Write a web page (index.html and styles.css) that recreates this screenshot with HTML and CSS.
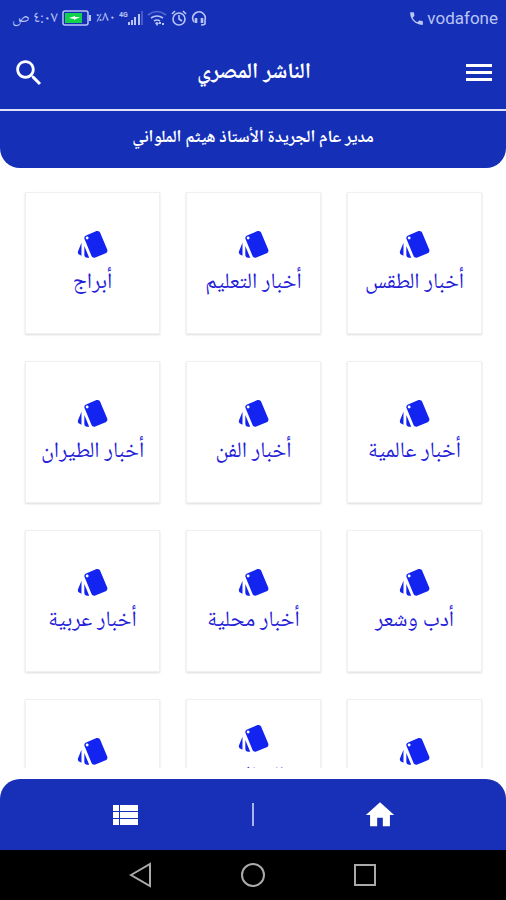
FILE: index.html
```
<!DOCTYPE html>
<html lang="ar" dir="rtl">
<head>
<meta charset="utf-8">
<meta name="viewport" content="width=device-width, initial-scale=1">
<title>الناشر المصري</title>
<link rel="stylesheet" href="styles.css">
</head>
<body>
<svg class="defs" aria-hidden="true">
  <symbol id="cards" viewBox="0 0 24 24"><path d="M2.53 19.65l1.34.56v-9.03l-2.43 5.86c-.41 1.02.08 2.19 1.09 2.61zm19.5-3.7L17.07 3.98c-.31-.75-1.04-1.21-1.81-1.23-.26 0-.53.04-.79.15L7.1 5.95c-.75.31-1.21 1.03-1.23 1.8-.01.27.04.54.15.8l4.96 11.97c.31.76 1.05 1.22 1.83 1.23.26 0 .52-.05.77-.15l7.36-3.05c1.02-.42 1.51-1.59 1.09-2.6zM7.88 8.75c-.55 0-1-.45-1-1s.45-1 1-1 1 .45 1 1-.45 1-1 1zm-2 11c0 1.1.9 2 2 2h1.45l-3.45-8.34v6.34z"/></symbol>
</svg>
<div class="status" dir="ltr">
  <div class="status-group">
    <span class="clock" dir="rtl">٤:٠٧ ص</span>
    <svg class="battery" viewBox="0 0 30 16" aria-hidden="true"><rect x="1" y="1" width="25" height="14" rx="2" fill="none" stroke="currentColor" stroke-width="1.5"/><rect x="3" y="3" width="17" height="10" fill="#12d24b"/><path d="M27 5h2v6h-2z" fill="currentColor"/><path d="M7 8l6-2v1h5l-6 3V9z" fill="#fff"/></svg>
    <span class="percent">٪٨٠</span>
    <svg class="signal" viewBox="0 0 24 16" aria-hidden="true"><path d="M9 12h2v3H9zM12 10h2v5h-2zM15 7h2v8h-2zM19 4h2v11h-2z" fill="currentColor"/><path d="M22 1h2v14h-2z" fill="currentColor" opacity=".3"/><text x="0" y="7" class="network">4G</text></svg>
    <svg class="wifi" viewBox="0 0 20 16" aria-hidden="true"><g fill="none" stroke="currentColor" stroke-width="1.6"><path d="M1 5q9-7 18 0" opacity=".4"/><path d="M4 8q6-4 12 0M7 11q3-2 6 0"/></g><path d="M8 13l2-1 2 1-2 3zM12 12h2v2h-2zM15 13h2v2h-2z" fill="currentColor"/></svg>
    <svg class="small-icon" viewBox="0 0 16 16" fill="none" stroke="currentColor" stroke-width="1.6" aria-hidden="true"><circle cx="8" cy="9" r="6"/><path d="M8 5v4l3 2M1 4l3-3M12 1l3 3"/></svg>
    <svg class="small-icon" viewBox="0 0 16 16" fill="none" stroke="currentColor" stroke-width="1.6" aria-hidden="true"><path d="M3 12a6.300 6.300 0 1 1 11-2v4q-1 1-4 1"/><path d="M5 8v5M11 8v5" stroke-width="2.600"/></svg>
  </div>
  <div class="status-group carrier">
    <svg class="phone" viewBox="0 0 24 24" fill="currentColor" aria-hidden="true"><path d="M20 15.500c-1.250 0-2.450-.2-3.570-.57-.35-.11-.74-.03-1.020.24l-2.200 2.200c-2.830-1.440-5.150-3.750-6.590-6.580l2.200-2.210c.28-.27.36-.66.25-1.010C8.700 6.450 8.500 5.250 8.500 4c0-.55-.45-1-1-1H4c-.55 0-1 .45-1 1 0 9.390 7.610 17 17 17 .55 0 1-.45 1-1v-3.500c0-.55-.45-1-1-1z"/></svg>
    <span>vodafone</span>
  </div>
</div>
<header class="header">
  <button class="icon-button" aria-label="القائمة"><svg class="icon-large" viewBox="0 0 34 34" fill="currentColor"><path d="M4 8h26v3H4zM4 15h26v3H4zM4 22h26v3H4z"/></svg></button>
  <h1>الناشر المصري</h1>
  <button class="icon-button" aria-label="بحث"><svg class="icon-large" viewBox="0 0 24 24" fill="currentColor"><path d="M15.500 14h-.79l-.28-.27C15.410 12.590 16 11.110 16 9.500 16 5.910 13.090 3 9.500 3S3 5.910 3 9.500 5.910 16 9.500 16c1.610 0 3.090-.59 4.230-1.570l.27.28v.79l5 4.990L20.490 19l-4.990-5zm-6 0C7.010 14 5 11.990 5 9.500S7.010 5 9.500 5 14 7.010 14 9.500 11.990 14 9.500 14z"/></svg></button>
</header>
<p class="banner">مدير عام الجريدة الأستاذ هيثم الملواني</p>
<main class="sections">
  <a class="card" href="#"><svg class="card-icon"><use href="#cards"/></svg><span>أخبار الطقس</span></a>
  <a class="card" href="#"><svg class="card-icon"><use href="#cards"/></svg><span>أخبار التعليم</span></a>
  <a class="card" href="#"><svg class="card-icon"><use href="#cards"/></svg><span>أبراج</span></a>
  <a class="card" href="#"><svg class="card-icon"><use href="#cards"/></svg><span>أخبار عالمية</span></a>
  <a class="card" href="#"><svg class="card-icon"><use href="#cards"/></svg><span>أخبار الفن</span></a>
  <a class="card" href="#"><svg class="card-icon"><use href="#cards"/></svg><span>أخبار الطيران</span></a>
  <a class="card" href="#"><svg class="card-icon"><use href="#cards"/></svg><span>أدب وشعر</span></a>
  <a class="card" href="#"><svg class="card-icon"><use href="#cards"/></svg><span>أخبار محلية</span></a>
  <a class="card" href="#"><svg class="card-icon"><use href="#cards"/></svg><span>أخبار عربية</span></a>
  <a class="card" href="#"><svg class="card-icon"><use href="#cards"/></svg></a>
  <a class="card card-tall" href="#"><svg class="card-icon"><use href="#cards"/></svg><span>المقالات</span></a>
  <a class="card" href="#"><svg class="card-icon"><use href="#cards"/></svg></a>
</main>
<nav class="tabs">
  <a href="#" aria-label="الرئيسية"><svg class="icon-large" viewBox="0 0 24 24" fill="currentColor"><path d="M10 20v-6h4v6h5v-8h3L12 3 2 12h3v8z"/></svg></a>
  <span class="divider"></span>
  <a href="#" aria-label="الأقسام"><svg class="icon-large" viewBox="0 0 34 34" fill="currentColor"><path d="M4 7h6v6H4zM11 7h18v6H11zM4 14h6v6H4zM11 14h18v6H11zM4 21h6v6H4zM11 21h18v6H11z"/></svg></a>
</nav>
<div class="system" dir="ltr">
  <button aria-label="رجوع"><svg viewBox="0 0 26 26"><path d="M3 13L22 2v22z"/></svg></button>
  <button aria-label="الشاشة الرئيسية"><svg viewBox="0 0 26 26"><circle cx="13" cy="13" r="11"/></svg></button>
  <button aria-label="التطبيقات الأخيرة"><svg viewBox="0 0 26 26"><path d="M3 3h20v20H3z"/></svg></button>
</div>
</body>
</html>
```
FILE: styles.css
```
* { box-sizing: border-box; }

body {
  margin: 0;
  height: 100vh;
  display: flex;
  flex-direction: column;
  background: #fff;
  font-family: "Noto Naskh Arabic", "Noto Sans Arabic", "Noto Sans", "DejaVu Sans", sans-serif;
}

svg { display: block; flex: none; }
.defs { position: absolute; width: 0; height: 0; }

button {
  padding: 0;
  border: 0;
  background: none;
  color: inherit;
}

.status {
  display: flex;
  flex: none;
  justify-content: space-between;
  align-items: center;
  height: 36px;
  padding: 0 8px 0 12px;
  background: #152fb7;
  color: #b9c5f5;
}

.status-group { display: flex; align-items: center; gap: 4px; }
.clock { font-size: 16px; white-space: nowrap; }
.percent { font-size: 15px; }
.battery { width: 30px; height: 16px; }
.signal { width: 24px; height: 16px; }
.network { font: bold 7px Roboto, sans-serif; fill: currentColor; }
.wifi { width: 20px; height: 16px; }
.small-icon { width: 16px; height: 16px; }
.carrier { gap: 2px; font: 17px Roboto, sans-serif; }
.phone { width: 17px; height: 17px; }

.header {
  display: flex;
  flex: none;
  justify-content: space-between;
  align-items: center;
  height: 73px;
  padding: 0 10px 0 12px;
  background: #152fb7;
  color: #fff;
}

.header h1 { margin: 0; font-size: 22px; line-height: 32px; }
.icon-large { width: 34px; height: 34px; }

.banner {
  flex: none;
  margin: 0;
  padding: 16px 16px 17px;
  border-top: 2px solid #dfe3fa;
  border-radius: 0 0 20px 20px;
  background: #152fb7;
  color: #fff;
  font-size: 17px;
  font-weight: bold;
  line-height: 24px;
  text-align: center;
}

.sections {
  flex: 1;
  min-height: 0;
  overflow: hidden;
  display: grid;
  grid-template-columns: repeat(3, 1fr);
  grid-auto-rows: 142px;
  gap: 27px 26px;
  margin-bottom: 11px;
  padding: 24px 24px 0 25px;
}

.card {
  display: flex;
  flex-direction: column;
  align-items: center;
  padding-top: 34px;
  border: 1px solid #f0f0f0;
  box-shadow: 0 1px 2px #dcdcdc;
  color: #2420d8;
  font-size: 22px;
  line-height: 28px;
  text-align: center;
  text-decoration: none;
}

.card-tall { padding-top: 21px; }
.card-icon { width: 34px; height: 34px; fill: #1424f0; margin-bottom: 8px; }

.tabs {
  flex: none;
  display: grid;
  grid-template-columns: 1fr 2px 1fr;
  align-items: center;
  justify-items: center;
  height: 71px;
  border-radius: 20px 20px 0 0;
  background: #182fb8;
}

.tabs a { color: #fff; }
.divider { width: 2px; height: 23px; background: #aab4e8; }

.system {
  flex: none;
  display: flex;
  align-items: center;
  justify-content: center;
  gap: 86px;
  height: 50px;
  background: #000;
}

.system svg { width: 26px; height: 26px; fill: none; stroke: #aaa; stroke-width: 2; }
```
